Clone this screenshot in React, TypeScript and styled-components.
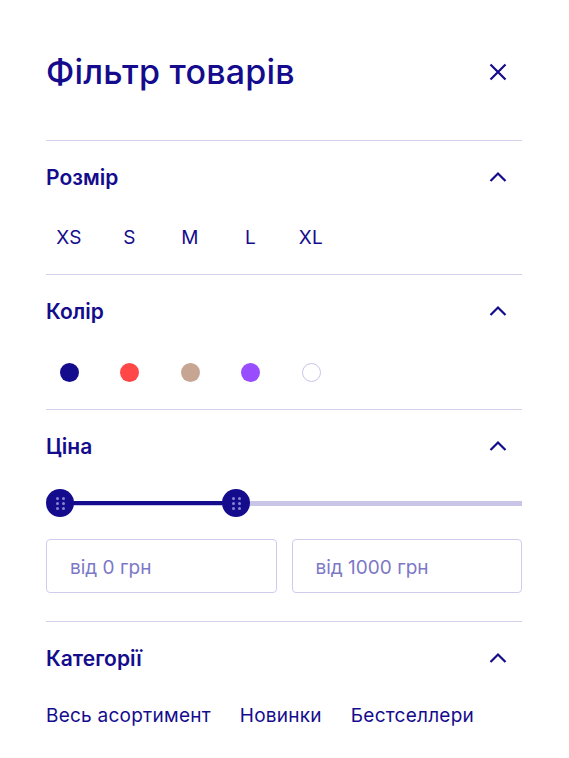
import styled, { createGlobalStyle } from 'styled-components';

const Global = createGlobalStyle`
  body {
    margin: 0;
    background: #ffffff;
    font-family: Inter, "Noto Sans", sans-serif;
    color: #140c8c;
  }
`;

const Panel = styled.div`
  padding: 0 47px 0 46px;
`;

const Header = styled.div`
  display: flex;
  align-items: center;
  justify-content: space-between;
  padding: 48px 0 44px;
  border-bottom: 1px solid #d4d1ef;
`;

const Title = styled.h1`
  margin: 0;
  font-size: 34px;
  line-height: 48px;
  font-weight: 500;
  letter-spacing: 0.2px;
`;

const IconButton = styled.button`
  display: flex;
  align-items: center;
  justify-content: center;
  width: 24px;
  height: 24px;
  margin-right: 12px;
  padding: 0;
  border: 0;
  background: none;
  color: #140c8c;
`;

const Section = styled.section<{ $pb?: number }>`
  padding: 23px 0 ${(p) => p.$pb ?? 25}px;
  border-bottom: 1px solid #d4d1ef;

  &:last-child {
    border-bottom: 0;
  }
`;

const SectionHead = styled.div`
  display: flex;
  align-items: center;
  justify-content: space-between;
  height: 26px;
`;

const SectionTitle = styled.h2`
  margin: 2px 0 0;
  font-size: 21px;
  font-weight: 600;
  line-height: 26px;
`;

const Options = styled.div<{ $mt: number; $gap: number }>`
  display: flex;
  align-items: center;
  gap: ${(p) => p.$gap}px;
  height: 24px;
  margin-top: ${(p) => p.$mt}px;
`;

const SizeOption = styled.span`
  width: 46px;
  padding-top: 2px;
  text-align: center;
  font-size: 19px;
  line-height: 24px;
  letter-spacing: 0.3px;
`;

const ColorCell = styled.span`
  display: flex;
  justify-content: center;
  width: 46px;
`;

const Swatch = styled.span<{ $color: string }>`
  width: 19px;
  height: 19px;
  border-radius: 50%;
  box-sizing: border-box;
  background: ${(p) => p.$color};
  border: ${(p) => (p.$color === '#ffffff' ? '1px solid #c9c5e8' : 'none')};
`;

const Slider = styled.div`
  position: relative;
  height: 28px;
  margin-top: 30px;
`;

const Track = styled.div`
  position: absolute;
  left: 14px;
  right: 0;
  top: 12px;
  height: 5px;
  background: #c9c5e8;
`;

const Fill = styled.div`
  position: absolute;
  top: 12px;
  height: 4px;
  background: #140c8c;
`;

const Thumb = styled.div`
  position: absolute;
  top: 0;
  width: 28px;
  height: 28px;
  margin-left: -14px;
  border-radius: 50%;
  background: #140c8c;
  display: grid;
  grid-template-columns: repeat(2, 3px);
  grid-auto-rows: 3px;
  gap: 2px 3px;
  align-content: center;
  justify-content: center;
`;

const Dot = styled.span`
  border-radius: 50%;
  background: #8985d3;
`;

const Inputs = styled.div`
  display: grid;
  grid-template-columns: 1fr 1fr;
  gap: 15px;
  margin-top: 22px;
`;

const PriceInput = styled.input`
  box-sizing: border-box;
  width: 100%;
  height: 54px;
  padding: 2px 23px 0;
  border: 1px solid #cfcced;
  border-radius: 4px;
  font-family: Inter, "Noto Sans", sans-serif;
  font-size: 19px;
  color: #140c8c;
  outline: none;

  &::placeholder {
    color: #7c78c6;
  }
`;

const Category = styled.span`
  padding-top: 2px;
  font-size: 19px;
  line-height: 24px;
  white-space: nowrap;
  letter-spacing: 0.25px;
`;

const Chevron = () => (
  <IconButton aria-label="toggle">
    <svg width="18" height="12" viewBox="0 0 18 12" fill="none">
      <path d="M1.5 10 L9 2.5 L16.5 10" stroke="currentColor" strokeWidth="2.2" />
    </svg>
  </IconButton>
);

const sizes = ['XS', 'S', 'M', 'L', 'XL'];
const colors = ['#140c8c', '#ff4747', '#c6a692', '#984dff', '#ffffff'];
const categories = ['Весь асортимент', 'Новинки', 'Бестселлери'];

const min = 0;
const max = 1000;
const upper = 381;

const App = (): JSX.Element => {
  const fillPct = ((upper - min) / (max - min)) * 100;
  const thumbPos = (pct: number) => `calc(14px + (100% - 14px) * ${pct / 100})`;

  return (
    <Panel>
      <Global />
      <Header>
        <Title>Фільтр товарів</Title>
        <IconButton aria-label="close">
          <svg width="18" height="18" viewBox="0 0 18 18" fill="none">
            <path d="M1.5 1.5 L16.5 16.5 M16.5 1.5 L1.5 16.5" stroke="currentColor" strokeWidth="2.2" />
          </svg>
        </IconButton>
      </Header>

      <Section>
        <SectionHead>
          <SectionTitle>Розмір</SectionTitle>
          <Chevron />
        </SectionHead>
        <Options $mt={35} $gap={14.5}>
          {sizes.map((s) => (
            <SizeOption key={s}>{s}</SizeOption>
          ))}
        </Options>
      </Section>

      <Section>
        <SectionHead>
          <SectionTitle>Колір</SectionTitle>
          <Chevron />
        </SectionHead>
        <Options $mt={36} $gap={14.5}>
          {colors.map((c) => (
            <ColorCell key={c}>
              <Swatch $color={c} />
            </ColorCell>
          ))}
        </Options>
      </Section>

      <Section $pb={28}>
        <SectionHead>
          <SectionTitle>Ціна</SectionTitle>
          <Chevron />
        </SectionHead>
        <Slider>
          <Track />
          <Fill style={{ left: thumbPos(0), width: `calc((100% - 14px) * ${fillPct / 100})` }} />
          {[0, fillPct].map((p) => (
            <Thumb key={p} style={{ left: thumbPos(p) }}>
              {Array.from({ length: 6 }).map((_, i) => (
                <Dot key={i} />
              ))}
            </Thumb>
          ))}
        </Slider>
        <Inputs>
          <PriceInput placeholder="від 0 грн" />
          <PriceInput placeholder="від 1000 грн" />
        </Inputs>
      </Section>

      <Section>
        <SectionHead>
          <SectionTitle>Категорії</SectionTitle>
          <Chevron />
        </SectionHead>
        <Options $mt={32} $gap={29}>
          {categories.map((c) => (
            <Category key={c}>{c}</Category>
          ))}
        </Options>
      </Section>
    </Panel>
  );
};

export default App;
